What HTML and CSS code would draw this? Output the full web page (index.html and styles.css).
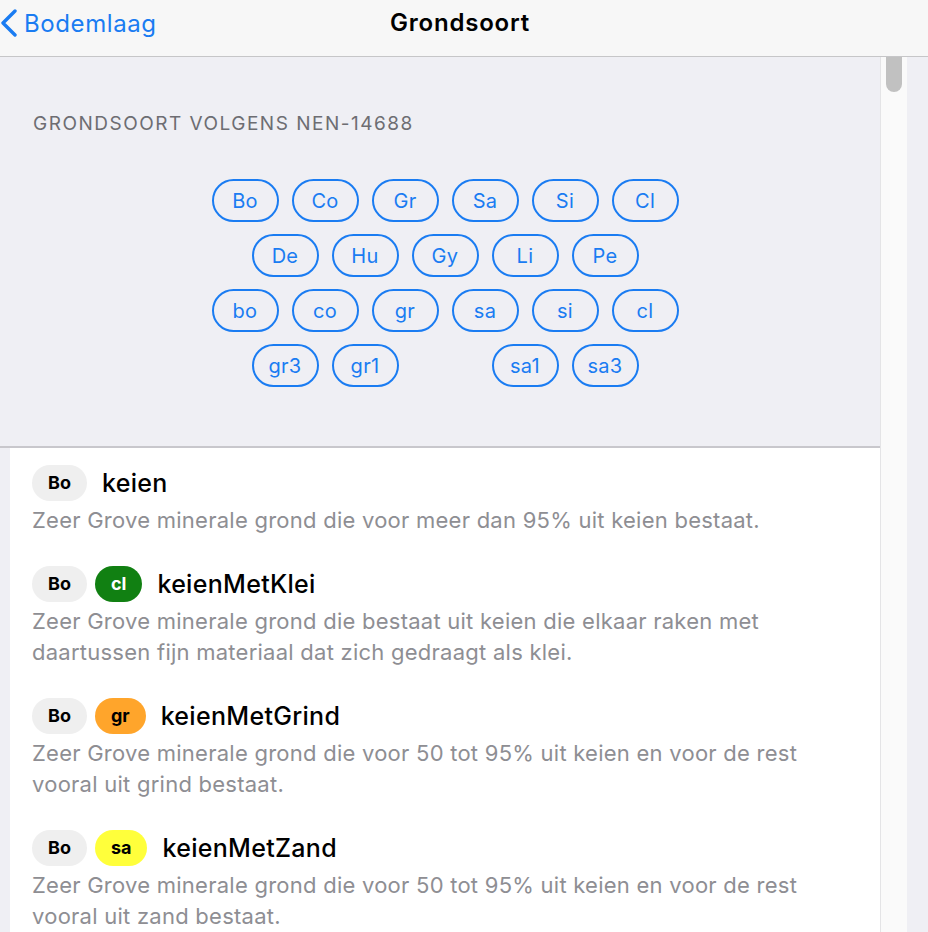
FILE: index.html
```html
<!DOCTYPE html>
<html lang="nl">
<head>
    <meta charset="UTF-8">
    <meta name="viewport" content="width=device-width, initial-scale=1.0">
    <title>Grondsoort</title>
    <link rel="stylesheet" href="styles.css">
</head>
<body>
    <header class="navbar">
        <a class="nav-back" href="#">
            <svg class="chevron" width="18" height="28" viewBox="0 0 18 28">
                <path d="M15 2 L3 14 L15 26" fill="none" stroke="#1a7cf2" stroke-width="3.4" stroke-linecap="round" stroke-linejoin="round"/>
            </svg>
            <span>Bodemlaag</span>
        </a>
        <h1 class="nav-title">Grondsoort</h1>
    </header>

    <div class="main">
        <div class="content">
            <section class="picker">
                <h2 class="section-header">GRONDSOORT VOLGENS NEN-14688</h2>
                <div class="chip-rows">
                    <div class="chip-row">
                        <button class="chip">Bo</button>
                        <button class="chip">Co</button>
                        <button class="chip">Gr</button>
                        <button class="chip">Sa</button>
                        <button class="chip">Si</button>
                        <button class="chip">Cl</button>
                    </div>
                    <div class="chip-row">
                        <button class="chip">De</button>
                        <button class="chip">Hu</button>
                        <button class="chip">Gy</button>
                        <button class="chip">Li</button>
                        <button class="chip">Pe</button>
                    </div>
                    <div class="chip-row">
                        <button class="chip">bo</button>
                        <button class="chip">co</button>
                        <button class="chip">gr</button>
                        <button class="chip">sa</button>
                        <button class="chip">si</button>
                        <button class="chip">cl</button>
                    </div>
                    <div class="chip-row">
                        <button class="chip">gr3</button>
                        <button class="chip">gr1</button>
                        <button class="chip chip-empty"></button>
                        <button class="chip">sa1</button>
                        <button class="chip">sa3</button>
                    </div>
                </div>
            </section>

            <section class="list">
                <div class="item">
                    <div class="item-head">
                        <span class="tag tag-grey">Bo</span>
                        <span class="item-title">keien</span>
                    </div>
                    <p class="item-desc">Zeer Grove minerale grond die voor meer dan 95% uit keien bestaat.</p>
                </div>
                <div class="item">
                    <div class="item-head">
                        <span class="tag tag-grey">Bo</span>
                        <span class="tag tag-green">cl</span>
                        <span class="item-title">keienMetKlei</span>
                    </div>
                    <p class="item-desc">Zeer Grove minerale grond die bestaat uit keien die elkaar raken met daartussen fijn materiaal dat zich gedraagt als klei.</p>
                </div>
                <div class="item">
                    <div class="item-head">
                        <span class="tag tag-grey">Bo</span>
                        <span class="tag tag-orange">gr</span>
                        <span class="item-title">keienMetGrind</span>
                    </div>
                    <p class="item-desc">Zeer Grove minerale grond die voor 50 tot 95% uit keien en voor de rest vooral uit grind bestaat.</p>
                </div>
                <div class="item">
                    <div class="item-head">
                        <span class="tag tag-grey">Bo</span>
                        <span class="tag tag-yellow">sa</span>
                        <span class="item-title">keienMetZand</span>
                    </div>
                    <p class="item-desc">Zeer Grove minerale grond die voor 50 tot 95% uit keien en voor de rest vooral uit zand bestaat.</p>
                </div>
            </section>
        </div>

        <div class="scroll-track">
            <div class="scroll-thumb"></div>
        </div>
        <div class="edge"></div>
    </div>
</body>
</html>
```

FILE: styles.css
```css
body {
    font-family: Inter, "Noto Sans", sans-serif;
    margin: 0;
    height: 932px;
    overflow: hidden;
    background-color: #efeff4;
    display: flex;
    flex-direction: column;
}
.navbar {
    height: 46px;
    padding-bottom: 10px;
    flex-shrink: 0;
    background-color: #f7f7f7;
    border-bottom: 1px solid #c6c6c8;
    display: flex;
    align-items: center;
    position: relative;
}
.nav-back {
    display: flex;
    align-items: center;
    gap: 6px;
    color: #1a7cf2;
    text-decoration: none;
    font-size: 24px;
    letter-spacing: 0.6px;
}
.chevron {
    display: block;
}
.nav-title {
    margin: 0;
    font-size: 24px;
    font-weight: 600;
    letter-spacing: 0.8px;
    color: #000;
    position: absolute;
    left: 0;
    right: 8px;
    top: 0;
    line-height: 46px;
    text-align: center;
    pointer-events: none;
}
.main {
    flex: 1;
    display: flex;
    min-height: 0;
}
.content {
    width: 880px;
    flex-shrink: 0;
    display: flex;
    flex-direction: column;
}
.picker {
    padding: 55px 0 59px 10px;
    border-bottom: 2px solid #c8c7cc;
}
.section-header {
    margin: 0 0 43px 23px;
    font-size: 19px;
    font-weight: 400;
    color: #6d6d72;
    letter-spacing: 1.5px;
    line-height: 24px;
}
.chip-rows {
    display: flex;
    flex-direction: column;
    gap: 12px;
}
.chip-row {
    display: flex;
    justify-content: center;
    gap: 13px;
}
.chip {
    width: 67px;
    height: 43px;
    border: 2px solid #1a7cf2;
    border-radius: 22px;
    background: transparent;
    color: #1a7cf2;
    font-family: inherit;
    font-size: 20px;
    letter-spacing: 0.3px;
    padding: 0;
}
.chip-empty {
    visibility: hidden;
}
.list {
    margin-left: 10px;
    background-color: #fff;
    flex: 1;
    padding: 17px 22px 0 22px;
    display: flex;
    flex-direction: column;
    gap: 30px;
}
.item-head {
    display: flex;
    align-items: center;
    gap: 8px;
    height: 36px;
}
.tag {
    height: 36px;
    line-height: 36px;
    padding: 0 16px;
    border-radius: 18px;
    font-size: 18px;
    font-weight: 700;
    color: #000;
}
.tag-grey { background-color: #efefef; }
.tag-green { background-color: #118012; color: #fff; }
.tag-orange { background-color: #ffa52b; }
.tag-yellow { background-color: #ffff3b; }
.item-title {
    margin-left: 7px;
    font-size: 25px;
    font-weight: 500;
    letter-spacing: 0.3px;
    color: #000;
}
.item-desc {
    margin: 4px 0 0 0;
    font-size: 22px;
    line-height: 31px;
    letter-spacing: 0.25px;
    color: #8e8e93;
}
.scroll-track {
    width: 26px;
    flex-shrink: 0;
    background-color: #fafafa;
    border-left: 1px solid #e4e4e6;
    display: flex;
    justify-content: center;
}
.scroll-thumb {
    width: 16px;
    height: 35px;
    background-color: #c1c1c1;
    border-radius: 0 0 8px 8px;
}
.edge {
    flex: 1;
}
```
